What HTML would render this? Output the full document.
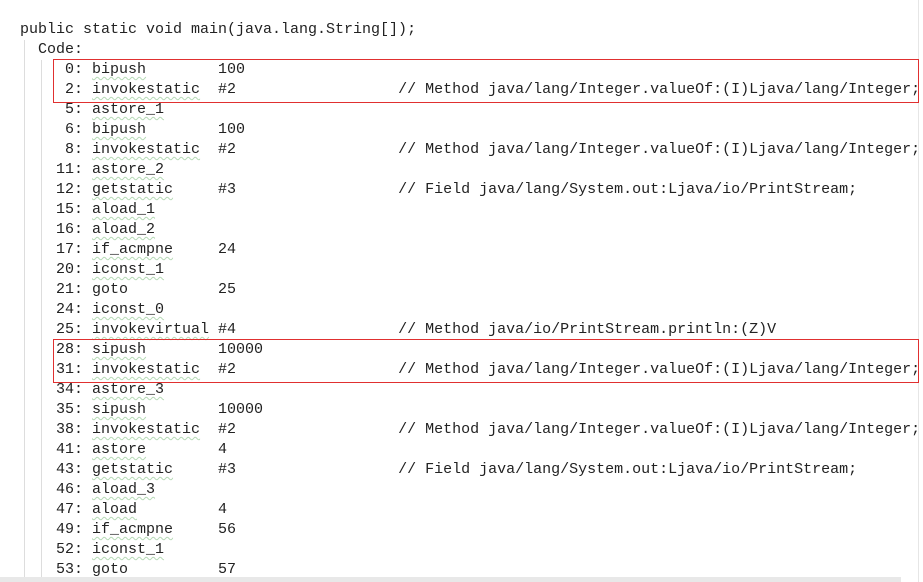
<!DOCTYPE html>
<html><head><style>
body{margin:0;background:#fff;width:923px;height:582px;overflow:hidden;position:relative}
pre{position:absolute;left:20px;top:20px;margin:0;font-family:"Liberation Mono",monospace;font-size:15px;line-height:20px;color:#222}
u{text-decoration:underline wavy #b5d9b5;text-decoration-thickness:1px;text-underline-offset:3px}
.v{position:absolute;width:1px;background:#ddd}
.box{position:absolute;border:1px solid #e03030;left:53px;width:864px;height:42px}
</style></head><body>
<div class="v" style="left:24px;top:40px;height:542px"></div>
<div class="v" style="left:41px;top:60px;height:522px"></div>
<div class="v" style="left:918px;top:0;height:582px;background:#e6e6e6"></div>
<div style="position:absolute;left:0;top:577px;width:901px;height:5px;background:#e8e8e8"></div>
<pre>public static void main(java.lang.String[]);
  Code:
     0: <u>bipush</u>        100
     2: <u>invokestatic</u>  #2                  // Method java/lang/Integer.valueOf:(I)Ljava/lang/Integer;
     5: <u>astore_1</u>
     6: <u>bipush</u>        100
     8: <u>invokestatic</u>  #2                  // Method java/lang/Integer.valueOf:(I)Ljava/lang/Integer;
    11: <u>astore_2</u>
    12: <u>getstatic</u>     #3                  // Field java/lang/System.out:Ljava/io/PrintStream;
    15: <u>aload_1</u>
    16: <u>aload_2</u>
    17: <u>if_acmpne</u>     24
    20: <u>iconst_1</u>
    21: goto          25
    24: <u>iconst_0</u>
    25: <u>invokevirtual</u> #4                  // Method java/io/PrintStream.println:(Z)V
    28: <u>sipush</u>        10000
    31: <u>invokestatic</u>  #2                  // Method java/lang/Integer.valueOf:(I)Ljava/lang/Integer;
    34: <u>astore_3</u>
    35: <u>sipush</u>        10000
    38: <u>invokestatic</u>  #2                  // Method java/lang/Integer.valueOf:(I)Ljava/lang/Integer;
    41: <u>astore</u>        4
    43: <u>getstatic</u>     #3                  // Field java/lang/System.out:Ljava/io/PrintStream;
    46: <u>aload_3</u>
    47: <u>aload</u>         4
    49: <u>if_acmpne</u>     56
    52: <u>iconst_1</u>
    53: goto          57</pre>
<div class="box" style="top:59px"></div>
<div class="box" style="top:339px"></div>
</body></html>
